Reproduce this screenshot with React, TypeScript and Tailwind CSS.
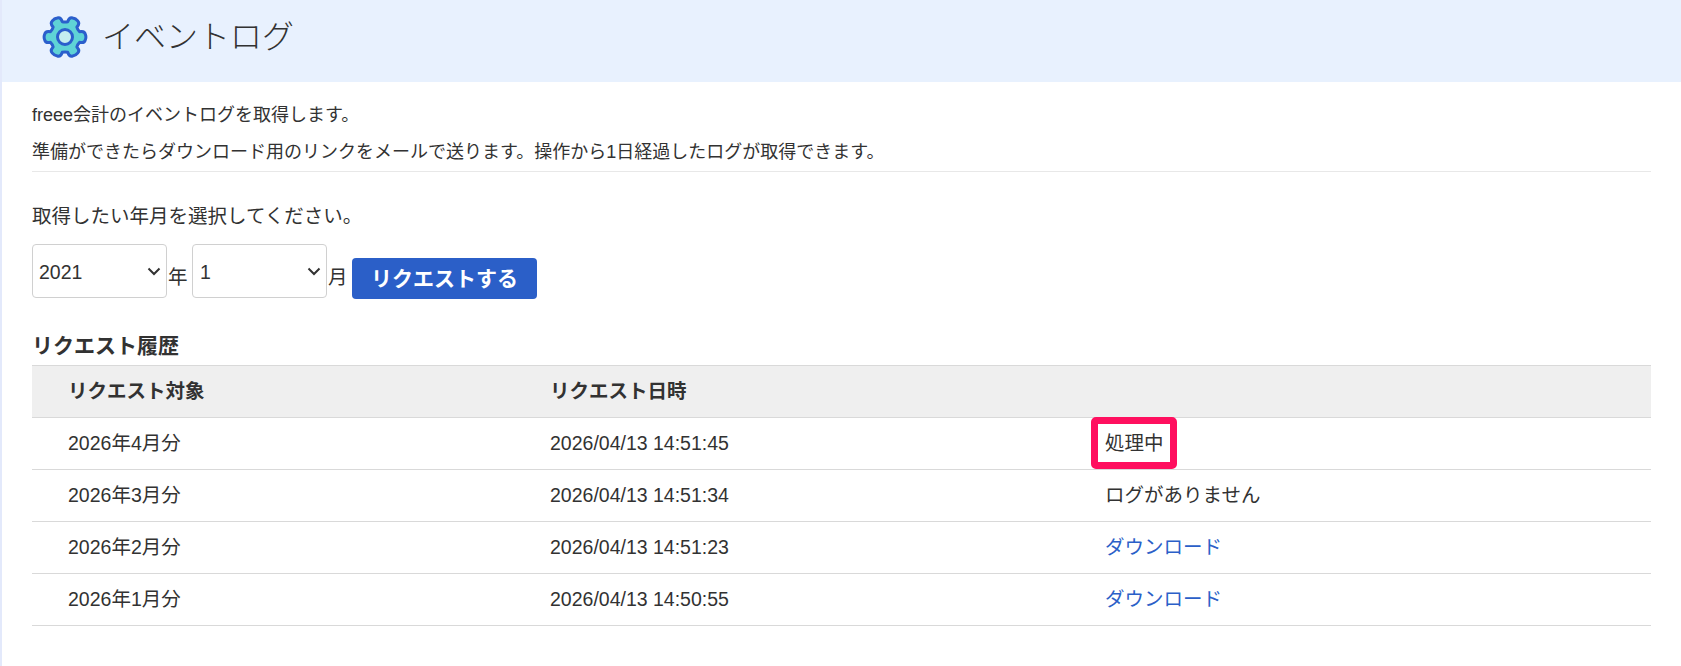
import React from 'react';

const font = { fontFamily: '"Liberation Sans", "Noto Sans CJK JP", sans-serif' };

const requests = [
  { target: '2026年4月分', date: '2026/04/13 14:51:45', status: '処理中', type: 'marked' },
  { target: '2026年3月分', date: '2026/04/13 14:51:34', status: 'ログがありません', type: 'text' },
  { target: '2026年2月分', date: '2026/04/13 14:51:23', status: 'ダウンロード', type: 'link' },
  { target: '2026年1月分', date: '2026/04/13 14:50:55', status: 'ダウンロード', type: 'link' },
];

// six teeth, one pointing right
const gearPath = () => {
  const pt = (r: number, deg: number) => {
    const a = (deg * Math.PI) / 180;
    return `${(23 + r * Math.cos(a)).toFixed(2)} ${(22 + r * Math.sin(a)).toFixed(2)}`;
  };
  const parts: string[] = [];
  for (let i = 0; i < 6; i++) {
    const a = i * 60;
    parts.push(`${i === 0 ? 'M' : 'L'}${pt(15.5, a - 20)}`);
    parts.push(`Q${pt(20.5, a - 18)} ${pt(20.5, a - 8)}`);
    parts.push(`Q${pt(21.5, a)} ${pt(20.5, a + 8)}`);
    parts.push(`Q${pt(20.5, a + 18)} ${pt(15.5, a + 20)}`);
    parts.push(`Q${pt(14.5, a + 30)} ${pt(15.5, a + 40)}`);
  }
  return parts.join(' ') + ' Z';
};

const GearIcon = () => (
  <svg width="46" height="44" viewBox="0 0 46 44" fill="none">
    <path d={gearPath()} fill="#5fd3d6" stroke="#2b5fcc" strokeWidth="3" strokeLinejoin="round" />
    <circle cx="23" cy="22" r="7.500" fill="#c5eef0" stroke="#2b5fcc" strokeWidth="3" />
  </svg>
);

const YearSelect = ({ value, pad }: { value: string; pad: string }) => (
  <div className="relative">
    <select
      defaultValue={value}
      className={`block h-[54px] w-[135px] appearance-none rounded-[4px] border border-[#d0d0d0] bg-white pt-[3px] text-[19.5px] text-[#323232] ${pad}`}
    >
      <option>{value}</option>
    </select>
    <svg className="pointer-events-none absolute right-[6px] top-[23px]" width="14" height="9" viewBox="0 0 14 9" fill="none">
      <path d="M1.500 1.500 L7 7 L12.500 1.500" stroke="#323232" strokeWidth="2" />
    </svg>
  </div>
);

export default function App() {
  return (
    <div className="min-h-[666px] border-l-[2px] border-[#e3e9fb] bg-white text-[19.5px] text-[#323232]" style={font}>
      <header className="flex h-[82px] items-center gap-[14px] bg-[#e8f1fe] pl-[40px] pb-[8px]">
        <GearIcon />
        <h1 className="text-[32px] font-light leading-none text-[#323232]">イベントログ</h1>
      </header>

      <main className="pl-[30px] pr-[30px]">
        <div className="border-b border-[#e8e8e8] pb-[3px] pt-[17px] text-[18px]">
          <p className="leading-[32px]">freee会計のイベントログを取得します。</p>
          <p className="mt-[5px] leading-[32px]">準備ができたらダウンロード用のリンクをメールで送ります。操作から1日経過したログが取得できます。</p>
        </div>

        <p className="mt-[32px] leading-[24px]">取得したい年月を選択してください。</p>

        <div className="mt-[16px] flex items-start">
          <YearSelect value="2021" pad="pl-[6px]" />
          <span className="mt-[21px] w-[25px] pl-[1px] leading-[24px]">年</span>
          <YearSelect value="1" pad="pl-[7px]" />
          <span className="mt-[21px] w-[25px] pl-[1px] leading-[24px]">月</span>
          <button className="mt-[14px] h-[41px] w-[185px] rounded-[4px] bg-[#2b5fc8] text-[21px] font-bold text-white">
            リクエストする
          </button>
        </div>

        <h2 className="mt-[33px] text-[21px] font-bold leading-[27px]">リクエスト履歴</h2>

        <table className="mt-[6px] w-full table-fixed border-collapse">
          <thead>
            <tr className="h-[52px] border-y border-[#d9d9d9] bg-[#efefef] text-left font-bold">
              <th className="w-[516px] pl-[36px]">リクエスト対象</th>
              <th className="w-[555px] pl-[2px]">リクエスト日時</th>
              <th />
            </tr>
          </thead>
          <tbody>
            {requests.map((r) => (
              <tr key={r.target} className="h-[52px] border-b border-[#d9d9d9]">
                <td className="pl-[36px]">{r.target}</td>
                <td className="pl-[2px]">{r.date}</td>
                <td className="pl-[2px]">
                  {r.type === 'link' ? (
                    <a href="#" className="text-[#2b5fc8]">{r.status}</a>
                  ) : r.type === 'marked' ? (
                    <span className="relative inline-block">
                      {r.status}
                      <span className="absolute left-[-14px] top-[-12px] h-[52px] w-[86px] rounded-[5px] border-[7px] border-[#ff0f5f]" />
                    </span>
                  ) : (
                    r.status
                  )}
                </td>
              </tr>
            ))}
          </tbody>
        </table>
      </main>
    </div>
  );
}
